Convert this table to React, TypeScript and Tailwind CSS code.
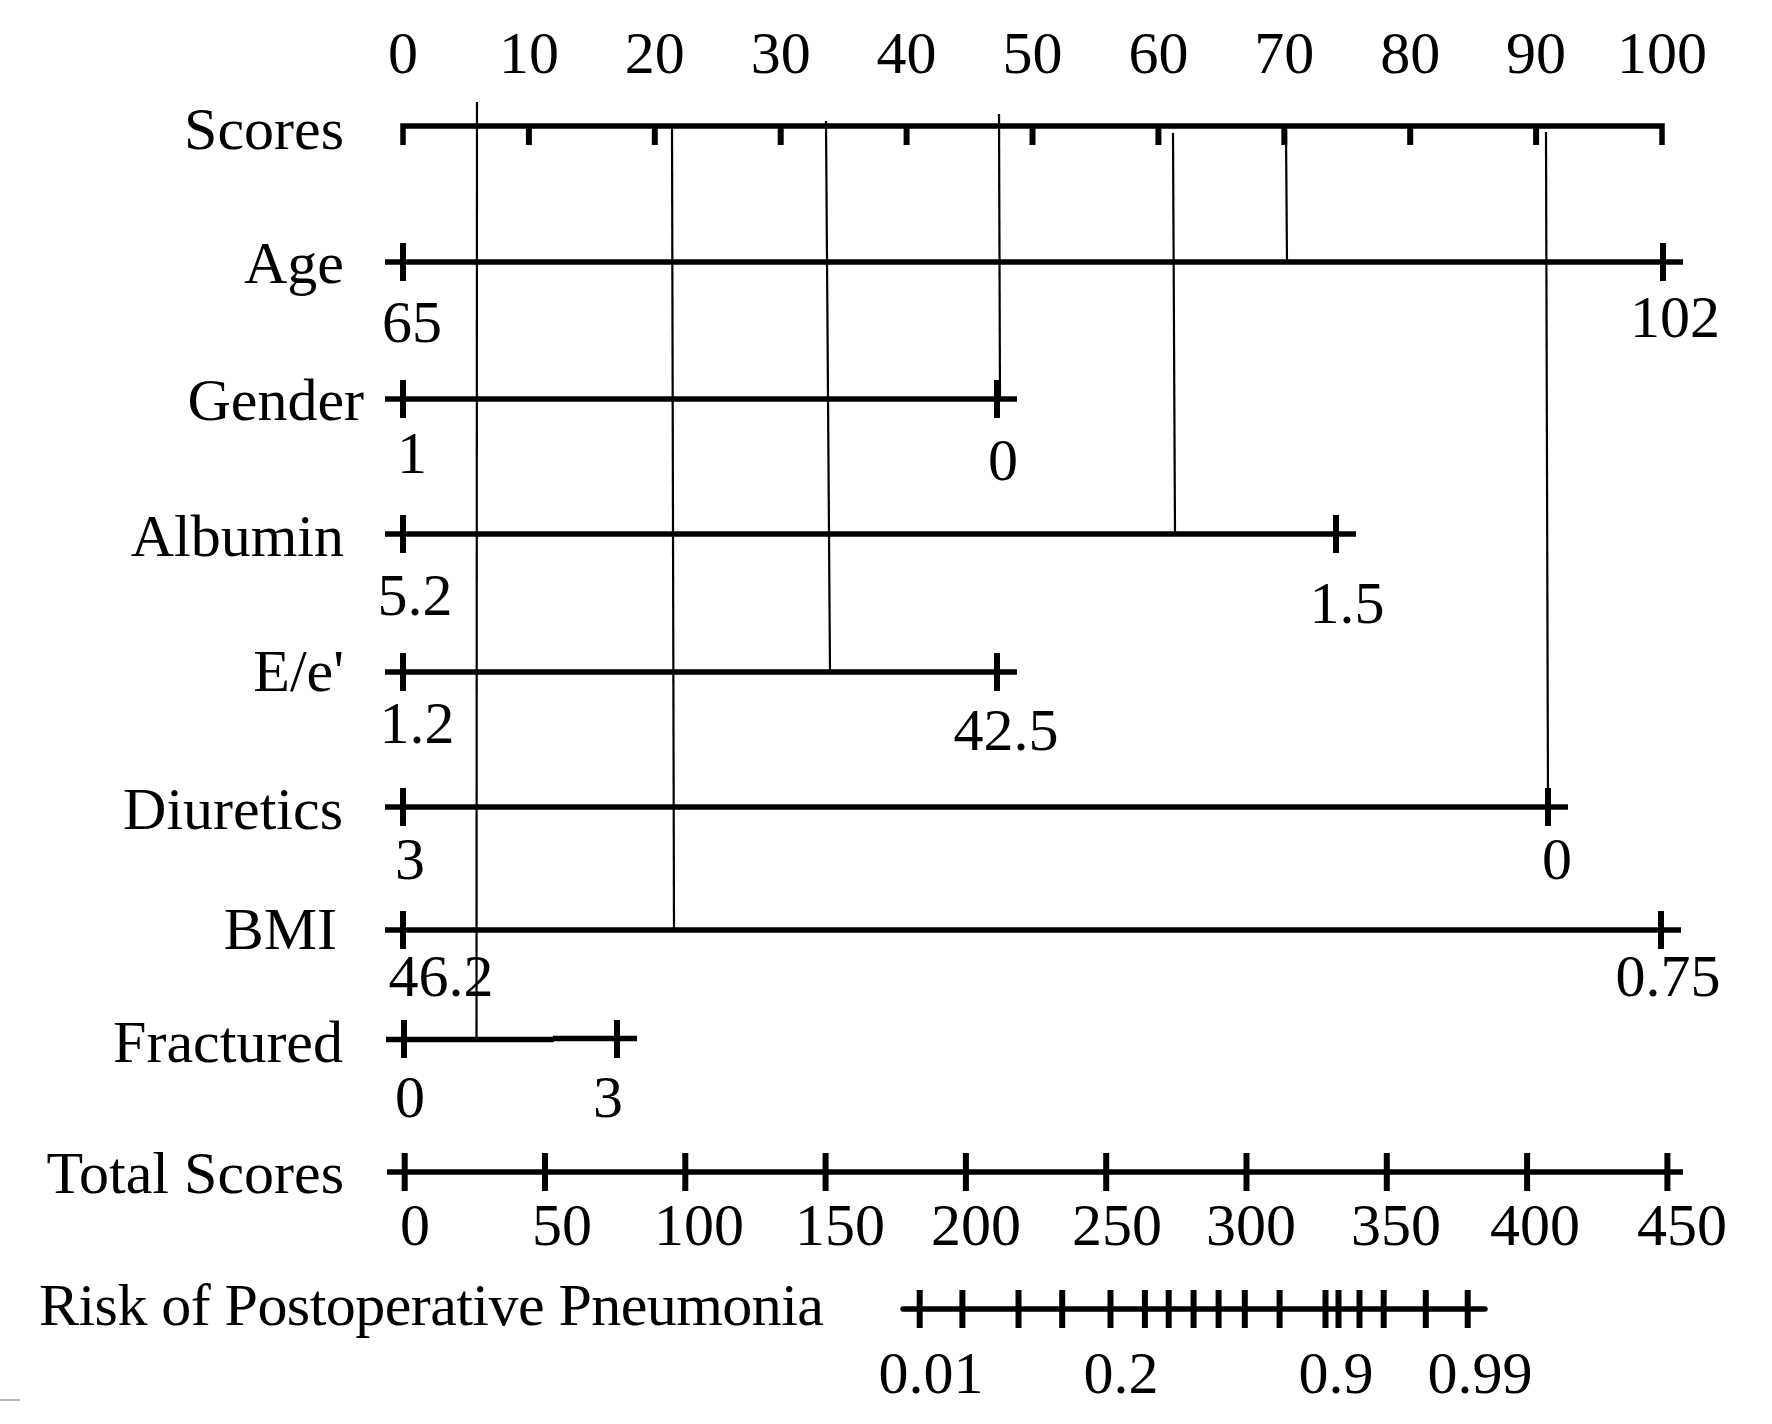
const serif = "'Liberation Serif', 'Times New Roman', serif"

// points axis: 0 at 403, 100 at 1662
const px = (v: number) => 403 + v * 12.59

type Row = {
  name: string
  labelX: number
  labelY: number
  y: number
  ticks: number[]
  end: number
  values: { text: string; x: number; y: number }[]
}

const rows: Row[] = [
  { name: 'Age', labelX: 344, labelY: 283, y: 262, ticks: [403, 1663], end: 1683, values: [{ text: '65', x: 412, y: 342 }, { text: '102', x: 1675, y: 337 }] },
  { name: 'Gender', labelX: 364, labelY: 420, y: 399, ticks: [403, 997], end: 1017, values: [{ text: '1', x: 412, y: 473 }, { text: '0', x: 1003, y: 480 }] },
  { name: 'Albumin', labelX: 344, labelY: 556, y: 534, ticks: [403, 1336], end: 1356, values: [{ text: '5.2', x: 415, y: 615 }, { text: '1.5', x: 1347, y: 623 }] },
  { name: "E/e'", labelX: 344, labelY: 691, y: 672, ticks: [403, 997], end: 1017, values: [{ text: '1.2', x: 417, y: 743 }, { text: '42.5', x: 1006, y: 750 }] },
  { name: 'Diuretics', labelX: 343, labelY: 829, y: 807, ticks: [403, 1548], end: 1568, values: [{ text: '3', x: 410, y: 879 }, { text: '0', x: 1557, y: 879 }] },
  { name: 'BMI', labelX: 337, labelY: 949, y: 930, ticks: [403, 1661], end: 1681, values: [{ text: '46.2', x: 441, y: 996 }, { text: '0.75', x: 1668, y: 996 }] },
]

const totalTicks = Array.from({ length: 10 }, (_, i) => 404.7 + i * 140.3)
const totalLabels = [
  { t: '0', x: 415 }, { t: '50', x: 562 }, { t: '100', x: 699 }, { t: '150', x: 840 }, { t: '200', x: 976 },
  { t: '250', x: 1117 }, { t: '300', x: 1251 }, { t: '350', x: 1396 }, { t: '400', x: 1535 }, { t: '450', x: 1682 },
]

const riskTicks = [919.7, 962.4, 1018.5, 1062.2, 1110.5, 1144.9, 1168.7, 1193.6, 1218.6, 1244.8, 1279.6, 1325.5, 1338.5, 1359.5, 1383.7, 1425.8, 1467.7]
const riskLabels = [
  { t: '0.01', x: 931 }, { t: '0.2', x: 1121 }, { t: '0.9', x: 1336 }, { t: '0.99', x: 1480 },
]

// the example patient: thin lines from each value up to the points axis
const guides = [
  { x1: 477, y1: 102, x2: 476.5, y2: 1038 },
  { x1: 672, y1: 124, x2: 674, y2: 930 },
  { x1: 826, y1: 121, x2: 830, y2: 672 },
  { x1: 999, y1: 114, x2: 1000, y2: 399 },
  { x1: 1173, y1: 133, x2: 1175, y2: 534 },
  { x1: 1286, y1: 130, x2: 1287, y2: 263 },
  { x1: 1546, y1: 132, x2: 1548, y2: 807 },
]

const AXIS = 5.5
const TICK = 6

function Plus({ x, y }: { x: number; y: number }) {
  return <line x1={x} y1={y - 19} x2={x} y2={y + 19} stroke="#000" strokeWidth={TICK} />
}

export default function App() {
  return (
    <div className="w-[1772px] h-[1424px] bg-white overflow-hidden relative">
      <svg width={1772} height={1424} viewBox="0 0 1772 1424" className="block" style={{ fontFamily: serif }}>
        {/* points scale */}
        {Array.from({ length: 11 }, (_, i) => (
          <text key={i} x={px(i * 10)} y={73} fontSize={60} textAnchor="middle" fill="#000">
            {i * 10}
          </text>
        ))}
        <text x={344} y={149} fontSize={60} textAnchor="end" fill="#000">Scores</text>
        <path d={`M403 145 V126 H1662 V145`} fill="none" stroke="#000" strokeWidth={AXIS} strokeLinejoin="miter" />
        {Array.from({ length: 9 }, (_, i) => (
          <line key={i} x1={px((i + 1) * 10)} y1={126} x2={px((i + 1) * 10)} y2={145} stroke="#000" strokeWidth={TICK} />
        ))}

        {/* variables */}
        {rows.map(r => (
          <g key={r.name}>
            <text x={r.labelX} y={r.labelY} fontSize={60} textAnchor="end" fill="#000">{r.name}</text>
            <line x1={385} y1={r.y} x2={r.end} y2={r.y} stroke="#000" strokeWidth={AXIS} />
            {r.ticks.map(t => <Plus key={t} x={t} y={r.y} />)}
            {r.values.map(v => (
              <text key={v.text + v.x} x={v.x} y={v.y} fontSize={60} textAnchor="middle" fill="#000">{v.text}</text>
            ))}
          </g>
        ))}

        {/* fractured: two slightly offset segments */}
        <text x={343} y={1062} fontSize={60} textAnchor="end" fill="#000">Fractured</text>
        <line x1={386} y1={1039.5} x2={554} y2={1039.5} stroke="#000" strokeWidth={AXIS} />
        <line x1={553} y1={1038.5} x2={637} y2={1038.5} stroke="#000" strokeWidth={AXIS} />
        <Plus x={404} y={1039} />
        <Plus x={617} y={1039} />
        <text x={410} y={1117} fontSize={60} textAnchor="middle" fill="#000">0</text>
        <text x={608} y={1117} fontSize={60} textAnchor="middle" fill="#000">3</text>

        {/* total points */}
        <text x={344} y={1193} fontSize={60} textAnchor="end" fill="#000">Total Scores</text>
        <line x1={387} y1={1172} x2={1683} y2={1172} stroke="#000" strokeWidth={AXIS} />
        {totalTicks.map(t => <Plus key={t} x={t} y={1172} />)}
        {totalLabels.map(l => (
          <text key={l.t} x={l.x} y={1245} fontSize={60} textAnchor="middle" fill="#000">{l.t}</text>
        ))}

        {/* risk */}
        <text x={39} y={1325} fontSize={60} textLength={785} lengthAdjust="spacing" fill="#000">
          Risk of Postoperative Pneumonia
        </text>
        <line x1={903} y1={1309} x2={1485} y2={1309} stroke="#000" strokeWidth={AXIS} strokeLinecap="round" />
        {riskTicks.map(t => <Plus key={t} x={t} y={1309} />)}
        {riskLabels.map(l => (
          <text key={l.t} x={l.x} y={1393} fontSize={60} textAnchor="middle" fill="#000">{l.t}</text>
        ))}

        {/* patient guide lines */}
        {guides.map((g, i) => (
          <line key={i} x1={g.x1} y1={g.y1} x2={g.x2} y2={g.y2} stroke="#000" strokeWidth={2.2} />
        ))}

        <rect x={0} y={1399} width={20} height={2} fill="#b4b4b4" />
      </svg>
    </div>
  )
}
